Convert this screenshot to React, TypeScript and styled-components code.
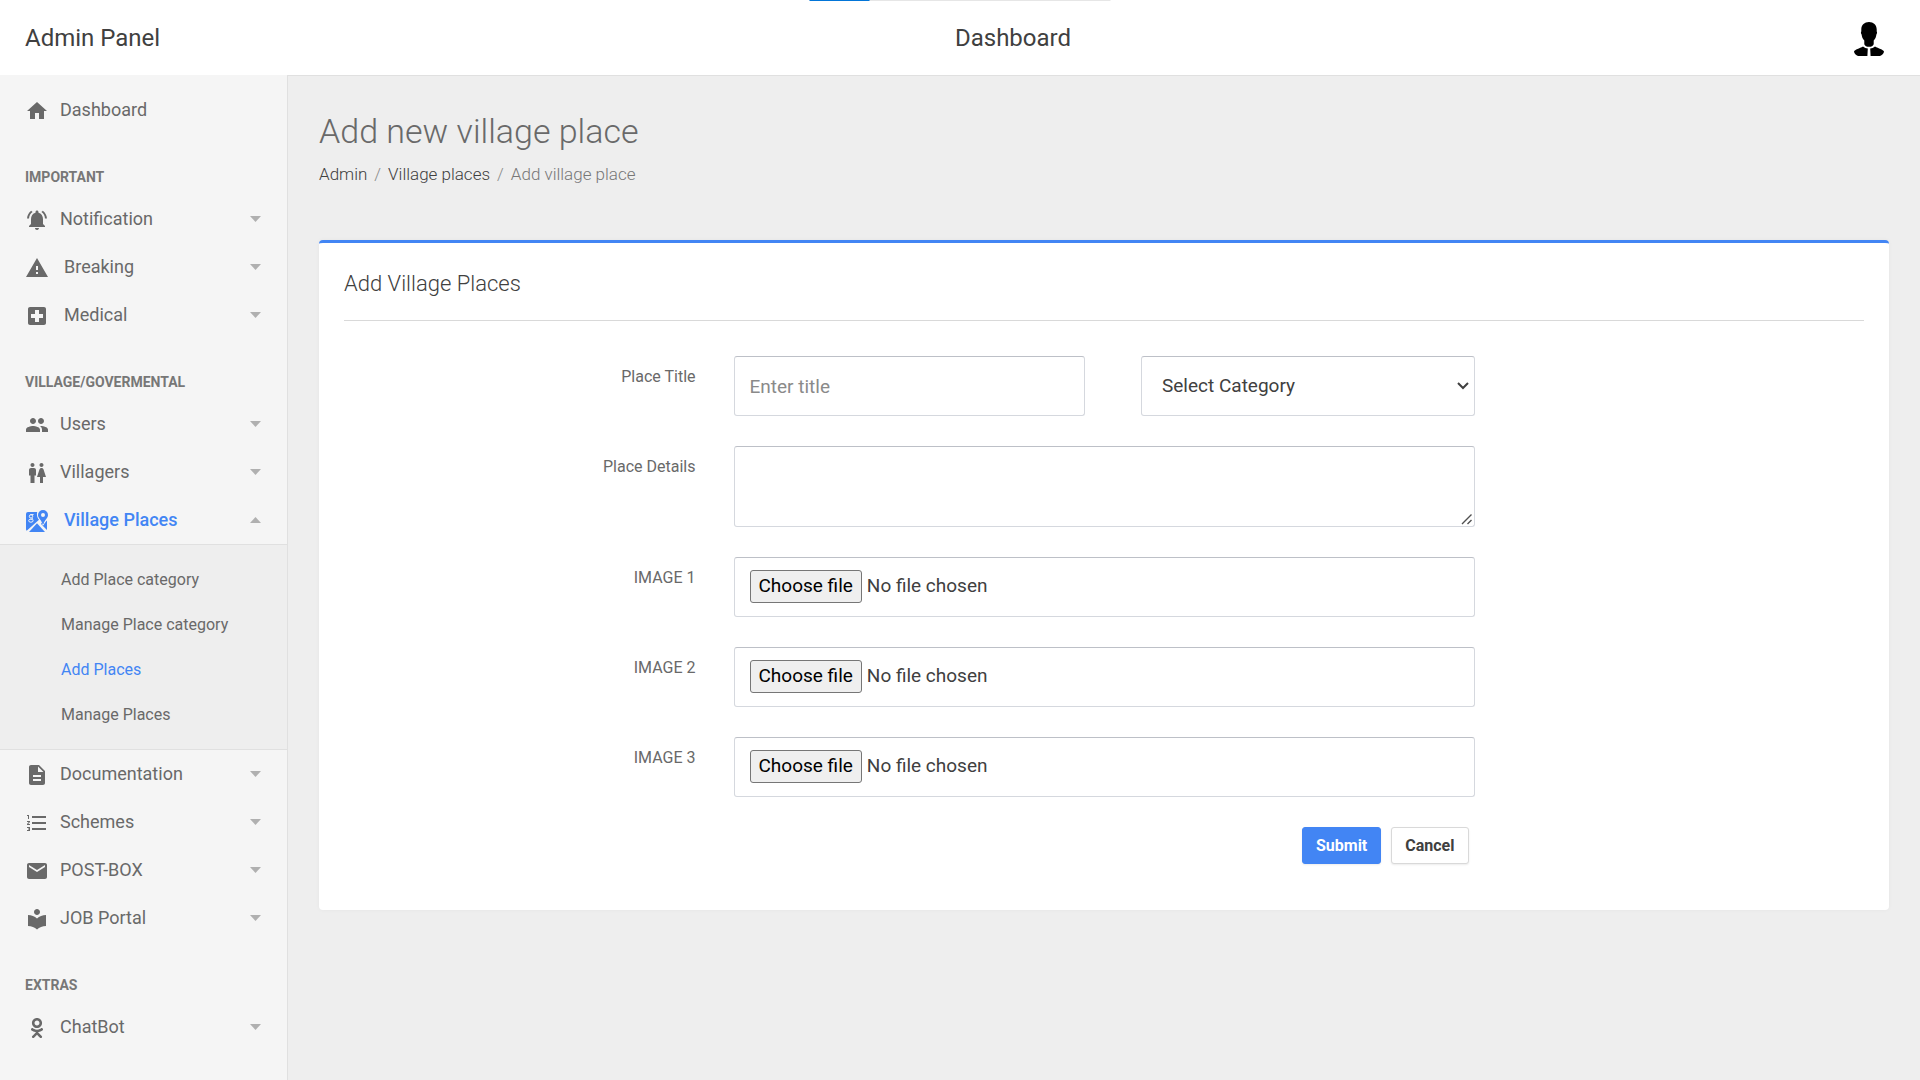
import React, { useState } from "react";
import styled, { createGlobalStyle, css } from "styled-components";
import type { IconType } from "react-icons";
import {
  MdDescription,
  MdEmail,
  MdFormatListNumbered,
  MdHome,
  MdLocalHospital,
  MdLocalLibrary,
  MdNotificationsActive,
  MdPeople,
  MdWarning,
  MdWc,
} from "react-icons/md";
import { FaOdnoklassniki } from "react-icons/fa";

const color = {
  primary: "#4285f4",
  ink: "#404040",
  text: "#696969",
  muted: "#8a8a8a",
  caret: "#b0b0b0",
  page: "#eeeeee",
  side: "#f5f5f5",
  line: "#e0e0e0",
  field: "#d5d8de",
  fieldTop: "#bdc0c7",
};

const GlobalStyle = createGlobalStyle`
  *, *::before, *::after { box-sizing: border-box; }
  body {
    margin: 0;
    background: ${color.page};
    color: ${color.ink};
    font-family: Roboto, "Liberation Sans", sans-serif;
    font-size: 16px;
    line-height: 24px;
  }
  button, input, select, textarea { font: inherit; color: inherit; }
  h1, h2, h3, ul, ol, p { margin: 0; padding: 0; font-weight: inherit; }
  ul, ol { list-style: none; }
  a { color: inherit; text-decoration: none; }
`;

const Page = styled.div`
  min-height: 100vh;
  display: flex;
  flex-direction: column;
`;

const TopBar = styled.header`
  display: grid;
  grid-template-columns: 288px 1fr 182px;
  align-items: center;
  height: 75px;
  background: #fff;
  font-size: 24px;
`;

const Brand = styled.a`
  padding-left: 25px;
`;

const TopTitle = styled.span`
  text-align: center;
`;

const UserButton = styled.button`
  justify-self: end;
  display: flex;
  margin-right: 36px;
  padding: 3px 0 0;
  border: 0;
  background: none;
  color: #000;
`;

const Loader = styled.div`
  position: absolute;
  top: 0;
  left: 50%;
  width: 301px;
  height: 1px;
  transform: translateX(-50%);
  background: #e6e6e6;
`;

const LoaderFill = styled.div`
  width: 20%;
  height: 100%;
  background: #0275d8;
`;

const Columns = styled.div`
  flex: 1;
  display: flex;
`;

const Sidebar = styled.nav`
  flex: 0 0 288px;
  padding: 11px 0 24px;
  border-right: 1px solid ${color.line};
  background: ${color.side};
`;

const SideHeading = styled.h2`
  padding: 31px 25px 6px;
  color: #777;
  font-size: 14px;
  font-weight: 700;
  text-transform: uppercase;
`;

const NavLink = styled.a<{ $open?: boolean; $indent?: boolean }>`
  display: flex;
  align-items: center;
  height: 48px;
  padding: 0 26px 0 25px;
  color: ${color.text};
  font-size: 18px;

  svg:first-child {
    flex: none;
    width: 24px;
    height: 24px;
    margin-top: 2px;
  }

  span {
    flex: 1;
    padding-left: ${(p) => (p.$indent ? 15 : 11)}px;
  }

  ${(p) =>
    p.$open &&
    css`
      color: ${color.primary};
      font-weight: 500;
    `}
`;

const Caret = styled.svg`
  width: 11px;
  height: 6px;
  fill: ${color.caret};
`;

const SubMenu = styled.ul`
  padding: 12px 0;
  border-top: 1px solid ${color.line};
  border-bottom: 1px solid ${color.line};
  background: ${color.page};
`;

const SubLink = styled.a<{ $active?: boolean }>`
  display: flex;
  align-items: center;
  height: 45px;
  padding-left: 61px;
  color: ${(p) => (p.$active ? color.primary : color.text)};
`;

const Main = styled.main`
  flex: 1;
  min-width: 0;
  padding: 35px 31px;
  border-top: 1px solid ${color.line};
`;

const PageTitle = styled.h1`
  color: ${color.text};
  font-size: 34px;
  font-weight: 300;
  line-height: 40px;
`;

const Breadcrumb = styled.ol`
  display: flex;
  margin: 11px 0 54px;
  font-size: 17px;
  font-weight: 300;

  li + li::before {
    content: "/";
    padding: 0 7px;
    color: ${color.muted};
  }

  li:last-child {
    color: #777;
  }
`;

const Card = styled.section`
  padding: 0 25px 46px;
  border-top: 3px solid ${color.primary};
  border-radius: 4px;
  background: #fff;
  box-shadow: 0 0 4px rgba(0, 0, 0, 0.04);
`;

const CardTitle = styled.h2`
  margin-bottom: 35px;
  padding: 29px 0 24px;
  border-bottom: 1px solid #d9d9d9;
  font-size: 22px;
  font-weight: 300;
`;

const Form = styled.form`
  display: flex;
  flex-direction: column;
  gap: 30px;
  margin: 0 -19px;
`;

const Row = styled.div`
  display: grid;
  grid-template-columns: 3fr 6fr 3fr;
`;

const Label = styled.label`
  padding: 11px 19px 0;
  color: ${color.text};
  line-height: 20px;
  text-align: right;
`;

const Cell = styled.div`
  display: flex;
  min-width: 0;
  padding: 0 19px;
`;

const Split = styled.div`
  flex: 1;
  display: grid;
  grid-template-columns: 1fr 1fr;
  margin: 0 -19px;
`;

const CategoryCell = styled(Cell)`
  padding-left: 37px;
`;

const field = css`
  width: 100%;
  min-width: 0;
  margin: 0;
  border: 1px solid ${color.field};
  border-top-color: ${color.fieldTop};
  border-radius: 3px;
  background: #fff;
  font-size: 19px;
`;

const TextInput = styled.input`
  ${field}
  height: 60px;
  padding: 0 15px;

  &::placeholder {
    color: ${color.muted};
  }
`;

const SelectBox = styled.div`
  position: relative;
  flex: 1;
  display: flex;
  min-width: 0;
`;

const Select = styled.select`
  ${field}
  height: 60px;
  padding: 0 32px 0 20px;
  appearance: none;
`;

const Chevron = styled.svg`
  position: absolute;
  top: 26px;
  right: 6px;
  width: 12px;
  height: 8px;
  fill: none;
  stroke: ${color.ink};
  stroke-width: 2;
  pointer-events: none;
`;

const TextArea = styled.textarea`
  ${field}
  display: block;
  height: 81px;
  padding: 12px 15px;
  resize: both;

  &::-webkit-resizer {
    background: url("data:image/svg+xml,%3Csvg xmlns='http://www.w3.org/2000/svg' viewBox='0 0 15 15'%3E%3Cpath d='M3 13 12.500 3.500M8.500 13l4-4' stroke='%23505050' stroke-width='1.400'/%3E%3C/svg%3E")
      no-repeat right bottom / 15px 15px;
  }
`;

const FileBox = styled.div`
  ${field}
  position: relative;
  display: flex;
  gap: 5px;
  height: 60px;
  padding: 12px 15px;
  line-height: 31px;
`;

const FileButton = styled.span`
  height: 33px;
  padding: 0 8px;
  border: 1px solid #767676;
  border-radius: 3px;
  background: #efefef;
  color: #000;
  line-height: 29px;
`;

const FileInput = styled.input`
  position: absolute;
  inset: 0;
  width: 100%;
  opacity: 0;
  cursor: pointer;
`;

const Actions = styled.div`
  grid-column: 2;
  display: flex;
  justify-content: flex-end;
  gap: 10px;
  padding-right: 25px;
`;

const Button = styled.button<{ $primary?: boolean }>`
  height: 37px;
  padding: 0 13px;
  border: 1px solid ${(p) => (p.$primary ? color.primary : "#d9d9d9")};
  border-radius: 3px;
  background: ${(p) => (p.$primary ? color.primary : "#fff")};
  color: ${(p) => (p.$primary ? "#fff" : color.ink)};
  font-weight: 700;
  box-shadow: 0 1px 2px rgba(0, 0, 0, 0.08);
`;

const ChatIcon = styled(FaOdnoklassniki)`
  padding: 2px;
`;

function MapsIcon() {
  return (
    <svg viewBox="0 0 24 24" fill="currentColor" aria-hidden="true">
      <path
        fillRule="evenodd"
        d="M18 1a5 5 0 0 1 5 5c0 3.2-3.6 5.2-4.5 9.2h-1C16.600 11.200 13 9.200 13 6a5 5 0 0 1 5-5Zm0 3a2 2 0 1 0 0 4 2 2 0 0 0 0-4Z"
      />
      <path d="M3 3h9.200A7 7 0 0 0 12 6c0 1.900.9 3.400 2 4.800L1.700 21.700A2 2 0 0 1 1 20V5a2 2 0 0 1 2-2Z" />
      <path d="M12 14.300 20 23H4Z" />
      <path d="M22 11.600V21l-6-6 .7-1.500.8 2.700h1.300c.5-1.900 1.900-3.100 3.200-4.600Z" />
      <g fill="none" stroke={color.side} strokeWidth="1">
        <circle cx="6" cy="7.400" r="1.700" />
        <path d="M5.400 5.600h3.200M6.900 9l.9 1.300" />
        <ellipse cx="5.900" cy="11.700" rx="2.200" ry="1.500" />
      </g>
    </svg>
  );
}

function PersonIcon() {
  return (
    <svg width="30" height="34" viewBox="0 0 30 34" fill="currentColor" aria-hidden="true">
      <path d="M15 0c4.500 0 7.600 2.900 7.700 7.300v2.200c.6.400.4 2.200-.3 3.100-.3 2.600-1.200 4.600-2.700 6v3.600c-.4 1.600-2.500 2.600-4.700 2.600s-4.300-1-4.700-2.600v-3.600c-1.500-1.400-2.400-3.400-2.700-6-.7-.9-.9-2.700-.3-3.100V7.300C7.400 2.900 10.500 0 15 0Z" />
      <path d="M9 24.400c1.500 1.200 3 1.800 4.800 2.100L13.400 34H4C2 33.400.2 31.600 0 29.600c.8-2.400 5.500-3.200 9-5.200Z" />
      <path d="M21 24.400c-1.500 1.200-3 1.800-4.800 2.100l.4 7.500H26c2-.6 3.800-2.400 4-4.400-.8-2.400-5.500-3.200-9-5.200Z" />
    </svg>
  );
}

type Item = {
  label: string;
  icon: IconType | typeof MapsIcon | typeof ChatIcon;
  indent?: boolean;
  leaf?: boolean;
  children?: string[];
};

const sections: { heading?: string; items: Item[] }[] = [
  { items: [{ label: "Dashboard", icon: MdHome, leaf: true }] },
  {
    heading: "Important",
    items: [
      { label: "Notification", icon: MdNotificationsActive },
      { label: "Breaking", icon: MdWarning, indent: true },
      { label: "Medical", icon: MdLocalHospital, indent: true },
    ],
  },
  {
    heading: "Village/Govermental",
    items: [
      { label: "Users", icon: MdPeople },
      { label: "Villagers", icon: MdWc },
      {
        label: "Village Places",
        icon: MapsIcon,
        indent: true,
        children: ["Add Place category", "Manage Place category", "Add Places", "Manage Places"],
      },
      { label: "Documentation", icon: MdDescription },
      { label: "Schemes", icon: MdFormatListNumbered },
      { label: "POST-BOX", icon: MdEmail },
      { label: "JOB Portal", icon: MdLocalLibrary },
    ],
  },
  { heading: "Extras", items: [{ label: "ChatBot", icon: ChatIcon }] },
];

function NavItem({ item }: { item: Item }) {
  const Icon = item.icon;
  const open = Boolean(item.children);
  return (
    <li>
      <NavLink href="#" $open={open} $indent={item.indent}>
        <Icon />
        <span>{item.label}</span>
        {!item.leaf && (
          <Caret viewBox="0 0 11 6" aria-hidden="true">
            <path d={open ? "M0 6h11L5.500 0Z" : "M0 0h11L5.500 6Z"} />
          </Caret>
        )}
      </NavLink>
      {item.children && (
        <SubMenu>
          {item.children.map((child) => (
            <li key={child}>
              <SubLink href="#" $active={child === "Add Places"}>
                {child}
              </SubLink>
            </li>
          ))}
        </SubMenu>
      )}
    </li>
  );
}

function FileRow({ index }: { index: number }) {
  const [name, setName] = useState("No file chosen");
  const id = `image-${index}`;
  return (
    <Row>
      <Label htmlFor={id}>IMAGE {index}</Label>
      <Cell>
        <FileBox>
          <FileButton>Choose file</FileButton>
          <span>{name}</span>
          <FileInput
            id={id}
            type="file"
            onChange={(e) => setName(e.target.files?.[0]?.name ?? "No file chosen")}
          />
        </FileBox>
      </Cell>
    </Row>
  );
}

export default function App() {
  return (
    <Page>
      <GlobalStyle />
      <TopBar>
        <Brand href="#">Admin Panel</Brand>
        <TopTitle>Dashboard</TopTitle>
        <UserButton type="button" aria-label="Account">
          <PersonIcon />
        </UserButton>
      </TopBar>
      <Loader role="progressbar" aria-label="Loading" aria-valuenow={20}>
        <LoaderFill />
      </Loader>
      <Columns>
        <Sidebar>
          {sections.map((section, i) => (
            <React.Fragment key={i}>
              {section.heading && <SideHeading>{section.heading}</SideHeading>}
              <ul>
                {section.items.map((item) => (
                  <NavItem key={item.label} item={item} />
                ))}
              </ul>
            </React.Fragment>
          ))}
        </Sidebar>
        <Main>
          <PageTitle>Add new village place</PageTitle>
          <Breadcrumb>
            <li>
              <a href="#">Admin</a>
            </li>
            <li>
              <a href="#">Village places</a>
            </li>
            <li>Add village place</li>
          </Breadcrumb>
          <Card>
            <CardTitle>Add Village Places</CardTitle>
            <Form onSubmit={(e) => e.preventDefault()}>
              <Row>
                <Label htmlFor="title">Place Title</Label>
                <Cell>
                  <Split>
                    <Cell>
                      <TextInput id="title" type="text" placeholder="Enter title" />
                    </Cell>
                    <CategoryCell>
                      <SelectBox>
                        <Select aria-label="Category">
                          <option>Select Category</option>
                        </Select>
                        <Chevron viewBox="0 0 12 8" aria-hidden="true">
                          <path d="m1 1 5 5 5-5" />
                        </Chevron>
                      </SelectBox>
                    </CategoryCell>
                  </Split>
                </Cell>
              </Row>
              <Row>
                <Label htmlFor="details">Place Details</Label>
                <Cell>
                  <TextArea id="details" />
                </Cell>
              </Row>
              <FileRow index={1} />
              <FileRow index={2} />
              <FileRow index={3} />
              <Row>
                <Actions>
                  <Button type="submit" $primary>
                    Submit
                  </Button>
                  <Button type="button">Cancel</Button>
                </Actions>
              </Row>
            </Form>
          </Card>
        </Main>
      </Columns>
    </Page>
  );
}
